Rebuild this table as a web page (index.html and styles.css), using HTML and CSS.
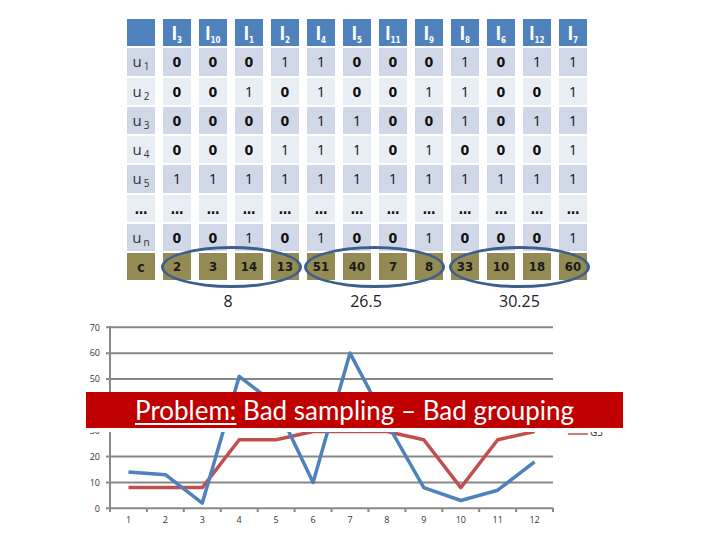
FILE: index.html
```html
<!DOCTYPE html>
<html>
<head>
<meta charset="utf-8">
<link rel="stylesheet" href="styles.css">
</head>
<body>
<div class="page">
  <div class="table-wrap">
    <div class="grid">
      <div class="cell hd"></div>
      <div class="cell hd">l<sub>3</sub></div>
      <div class="cell hd">l<sub>10</sub></div>
      <div class="cell hd">l<sub>1</sub></div>
      <div class="cell hd">l<sub>2</sub></div>
      <div class="cell hd">l<sub>4</sub></div>
      <div class="cell hd">l<sub>5</sub></div>
      <div class="cell hd">l<sub>11</sub></div>
      <div class="cell hd">l<sub>9</sub></div>
      <div class="cell hd">l<sub>8</sub></div>
      <div class="cell hd">l<sub>6</sub></div>
      <div class="cell hd">l<sub>12</sub></div>
      <div class="cell hd">l<sub>7</sub></div>

      <div class="cell dk lbl">u<sub>1</sub></div>
      <div class="cell dk z">0</div><div class="cell dk z">0</div><div class="cell dk z">0</div><div class="cell dk o">1</div><div class="cell dk o">1</div><div class="cell dk z">0</div><div class="cell dk z">0</div><div class="cell dk z">0</div><div class="cell dk o">1</div><div class="cell dk z">0</div><div class="cell dk o">1</div><div class="cell dk o">1</div>

      <div class="cell lt lbl">u<sub>2</sub></div>
      <div class="cell lt z">0</div><div class="cell lt z">0</div><div class="cell lt o">1</div><div class="cell lt z">0</div><div class="cell lt o">1</div><div class="cell lt z">0</div><div class="cell lt z">0</div><div class="cell lt o">1</div><div class="cell lt o">1</div><div class="cell lt z">0</div><div class="cell lt z">0</div><div class="cell lt o">1</div>

      <div class="cell dk lbl">u<sub>3</sub></div>
      <div class="cell dk z">0</div><div class="cell dk z">0</div><div class="cell dk z">0</div><div class="cell dk z">0</div><div class="cell dk o">1</div><div class="cell dk o">1</div><div class="cell dk z">0</div><div class="cell dk z">0</div><div class="cell dk o">1</div><div class="cell dk z">0</div><div class="cell dk o">1</div><div class="cell dk o">1</div>

      <div class="cell lt lbl">u<sub>4</sub></div>
      <div class="cell lt z">0</div><div class="cell lt z">0</div><div class="cell lt z">0</div><div class="cell lt o">1</div><div class="cell lt o">1</div><div class="cell lt o">1</div><div class="cell lt z">0</div><div class="cell lt o">1</div><div class="cell lt z">0</div><div class="cell lt z">0</div><div class="cell lt z">0</div><div class="cell lt o">1</div>

      <div class="cell dk lbl">u<sub>5</sub></div>
      <div class="cell dk o">1</div><div class="cell dk o">1</div><div class="cell dk o">1</div><div class="cell dk o">1</div><div class="cell dk o">1</div><div class="cell dk o">1</div><div class="cell dk o">1</div><div class="cell dk o">1</div><div class="cell dk o">1</div><div class="cell dk o">1</div><div class="cell dk o">1</div><div class="cell dk o">1</div>

      <div class="cell lt z">…</div>
      <div class="cell lt z">…</div><div class="cell lt z">…</div><div class="cell lt z">…</div><div class="cell lt z">…</div><div class="cell lt z">…</div><div class="cell lt z">…</div><div class="cell lt z">…</div><div class="cell lt z">…</div><div class="cell lt z">…</div><div class="cell lt z">…</div><div class="cell lt z">…</div><div class="cell lt z">…</div>

      <div class="cell dk lbl">u<sub>n</sub></div>
      <div class="cell dk z">0</div><div class="cell dk z">0</div><div class="cell dk o">1</div><div class="cell dk z">0</div><div class="cell dk o">1</div><div class="cell dk z">0</div><div class="cell dk z">0</div><div class="cell dk o">1</div><div class="cell dk z">0</div><div class="cell dk z">0</div><div class="cell dk z">0</div><div class="cell dk o">1</div>

      <div class="cell ol c">c</div>
      <div class="cell ol z">2</div><div class="cell ol z">3</div><div class="cell ol z">14</div><div class="cell ol z">13</div><div class="cell ol z">51</div><div class="cell ol z">40</div><div class="cell ol z">7</div><div class="cell ol z">8</div><div class="cell ol z">33</div><div class="cell ol z">10</div><div class="cell ol z">18</div><div class="cell ol z">60</div>
    </div>
    <div class="ring ring1"></div>
    <div class="ring ring2"></div>
    <div class="ring ring3"></div>
  </div>

  <div class="avgs">
    <span class="avg a1">8</span>
    <span class="avg a2">26.5</span>
    <span class="avg a3">30.25</span>
  </div>

  <div class="chart">
    <svg class="plot" width="720" height="230" viewBox="0 310 720 230">
      <g class="grid-lines">
        <line x1="106" y1="327.3" x2="553" y2="327.3"/>
        <line x1="106" y1="353.2" x2="553" y2="353.2"/>
        <line x1="106" y1="379" x2="553" y2="379"/>
        <line x1="106" y1="404.9" x2="553" y2="404.9"/>
        <line x1="106" y1="430.7" x2="553" y2="430.7"/>
        <line x1="106" y1="456.6" x2="553" y2="456.6"/>
        <line x1="106" y1="482.4" x2="553" y2="482.4"/>
        <line x1="106" y1="508.3" x2="553" y2="508.3"/>
        <line x1="110" y1="326" x2="110" y2="512"/>
      </g>
      <g class="ticks">
        <line x1="146.9" y1="508" x2="146.9" y2="512"/>
        <line x1="183.8" y1="508" x2="183.8" y2="512"/>
        <line x1="220.8" y1="508" x2="220.8" y2="512"/>
        <line x1="257.7" y1="508" x2="257.7" y2="512"/>
        <line x1="294.6" y1="508" x2="294.6" y2="512"/>
        <line x1="331.5" y1="508" x2="331.5" y2="512"/>
        <line x1="368.4" y1="508" x2="368.4" y2="512"/>
        <line x1="405.4" y1="508" x2="405.4" y2="512"/>
        <line x1="442.3" y1="508" x2="442.3" y2="512"/>
        <line x1="479.2" y1="508" x2="479.2" y2="512"/>
        <line x1="516.1" y1="508" x2="516.1" y2="512"/>
        <line x1="553" y1="508" x2="553" y2="512"/>
      </g>
      <g class="ylab">
        <text x="100" y="330.5">70</text>
        <text x="100" y="356.4">60</text>
        <text x="100" y="382.2">50</text>
        <text x="100" y="433.9">30</text>
        <text x="100" y="459.8">20</text>
        <text x="100" y="485.6">10</text>
        <text x="100" y="511.5">0</text>
      </g>
      <g class="xlab">
        <text x="128.5" y="523">1</text>
        <text x="165.4" y="523">2</text>
        <text x="202.3" y="523">3</text>
        <text x="239.2" y="523">4</text>
        <text x="276.1" y="523">5</text>
        <text x="313.1" y="523">6</text>
        <text x="350" y="523">7</text>
        <text x="386.9" y="523">8</text>
        <text x="423.8" y="523">9</text>
        <text x="460.8" y="523">10</text>
        <text x="497.7" y="523">11</text>
        <text x="534.6" y="523">12</text>
      </g>
      <polyline class="s-red" points="128.5,487.6 165.4,487.6 202.3,487.6 239.2,439.8 276.1,439.8 313.1,431.5 350,431.5 386.9,431.5 423.8,439.8 460.8,487.6 497.7,439.8 534.6,431.5"/>
      <polyline class="s-blue" points="128.5,472.1 165.4,474.7 202.3,503.1 239.2,376.4 276.1,404.9 313.1,482.4 350,353.1 386.9,423 423.8,487.6 460.8,500.5 497.7,490.2 534.6,461.8"/>
      <line class="legend-red" x1="568" y1="434" x2="588" y2="434"/>
      <text class="legend-text" x="590" y="435.5">G3</text>
    </svg>
    <div class="banner"><span class="u">Problem:</span> Bad sampling – Bad grouping</div>
  </div>
</div>
</body>
</html>
```

FILE: styles.css
```css
html, body {
  margin: 0;
  padding: 0;
  background: #ffffff;
}
.page {
  width: 720px;
  height: 540px;
  overflow: hidden;
  position: relative;
  font-family: "Open Sans", "Liberation Sans", sans-serif;
}
.table-wrap {
  position: relative;
  padding: 19px 0 0 127px;
}
.grid {
  display: grid;
  grid-template-columns: repeat(13, 28px);
  grid-auto-rows: 27.25px;
  column-gap: 8px;
  row-gap: 2px;
}
.cell {
  display: block;
  text-align: center;
  line-height: 28px;
  font-family: "DejaVu Sans Condensed", "DejaVu Sans", sans-serif;
  font-size: 14px;
  color: #111;
  white-space: nowrap;
}
.cell sub {
  line-height: 0;
}
.hd {
  background: #4f81bd;
  color: #ffffff;
  font-weight: bold;
  font-size: 17px;
  line-height: 30px;
}
.hd sub {
  font-size: 8px;
  vertical-align: -3px;
}
.dk { background: #d0d8e8; }
.lt { background: #e9edf4; }
.ol { background: #948a54; }
.z { font-weight: bold; }
.o { font-weight: normal; font-family: "Open Sans", sans-serif; font-size: 14px; }
.lbl {
  font-family: "Open Sans", sans-serif;
  font-size: 15px;
  color: #333;
  line-height: 27px;
}
.lbl sub { font-size: 10px; vertical-align: -3px; margin-left: 2px; }
.c { font-weight: bold; font-size: 14px; color: #222; }
.ol.z { font-size: 13px; color: #1a1a1a; }
.ring {
  position: absolute;
  top: 246px;
  width: 141px;
  height: 42px;
  box-sizing: border-box;
  border: 3px solid #3c5f8c;
  border-radius: 50%;
}
.ring1 { left: 161px; }
.ring2 { left: 304px; }
.ring3 { left: 449px; }
.avgs {
  display: flex;
  margin-top: 12.75px;
  height: 17px;
  line-height: 17px;
  font-size: 16px;
  color: #222;
}
.avg {
  width: 40px;
  text-align: center;
}
.a1 { margin-left: 208px; }
.a2 { margin-left: 98px; }
.a3 { margin-left: 113px; }
.chart {
  position: relative;
  height: 230px;
}
.plot { display: block; }
.grid-lines line, .ticks line {
  stroke: #888888;
  stroke-width: 2;
}
.ylab text {
  font-family: "Open Sans", sans-serif;
  font-size: 9px;
  fill: #333;
  text-anchor: end;
}
.xlab text {
  font-family: "Open Sans", sans-serif;
  font-size: 9px;
  fill: #333;
  text-anchor: middle;
}
.s-blue, .s-red {
  fill: none;
  stroke-width: 3.5;
  stroke-linejoin: round;
}
.s-blue { stroke: #4f81bd; }
.s-red { stroke: #c0504d; }
.legend-red { stroke: #c0504d; stroke-width: 1.5; }
.legend-text {
  font-family: "Open Sans", sans-serif;
  font-size: 10px;
  fill: #333;
}
.banner {
  position: absolute;
  left: 86px;
  top: 82px;
  width: 537px;
  height: 36px;
  background: #c00000;
  color: #ffffff;
  font-family: Lato, "Open Sans", sans-serif;
  font-size: 26px;
  line-height: 36px;
  text-align: center;
  border-bottom: 4px solid #ffffff;
}
.u { text-decoration: underline; text-decoration-thickness: 2px; text-underline-offset: 3px; }
```
